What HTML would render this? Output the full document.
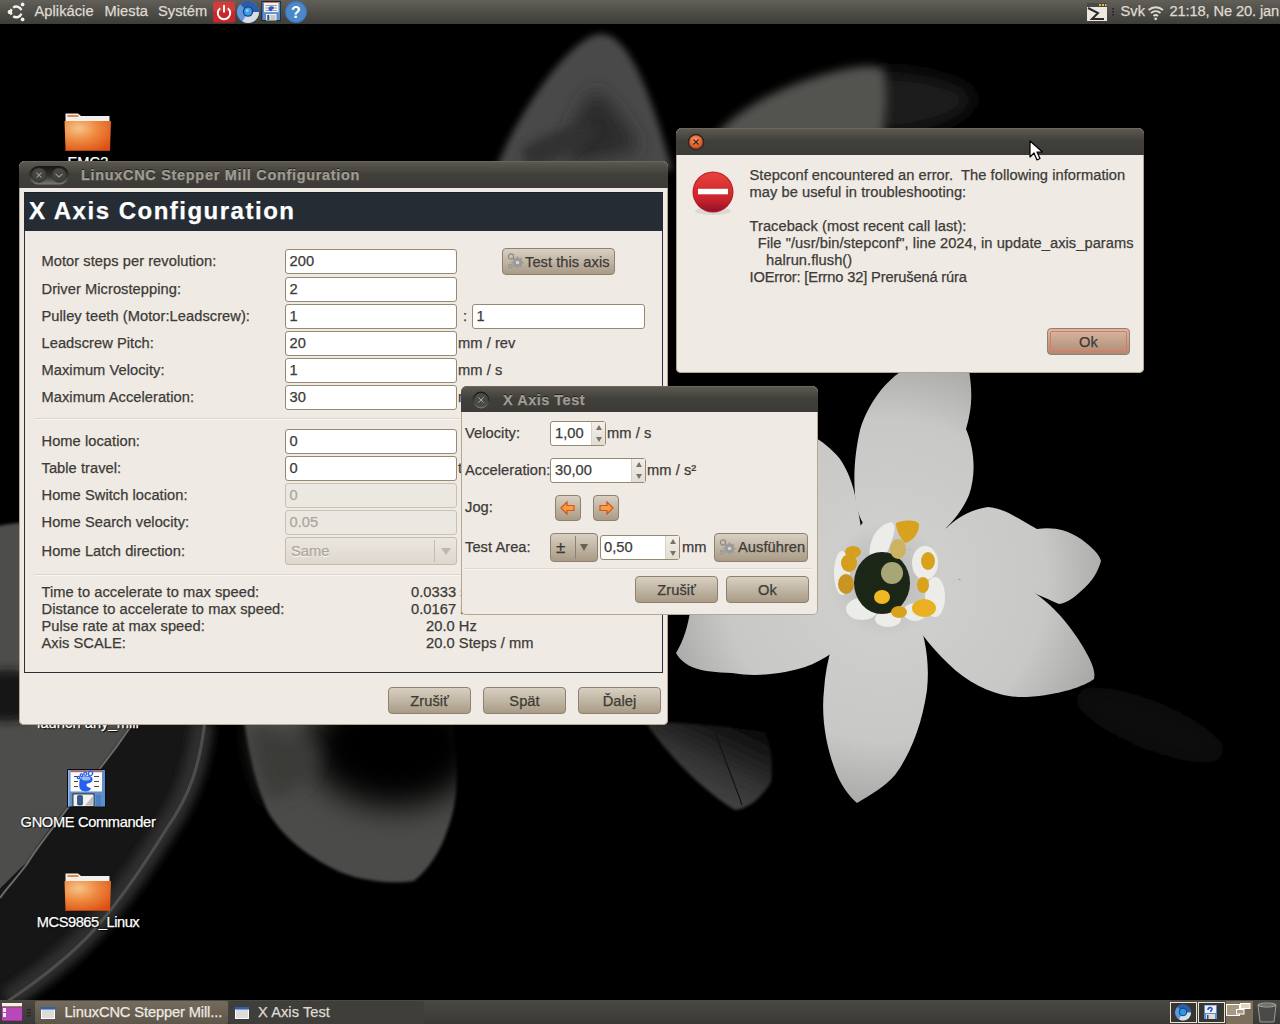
<!DOCTYPE html>
<html><head><meta charset="utf-8">
<style>
*{box-sizing:border-box;margin:0;padding:0}
html,body{width:1280px;height:1024px;overflow:hidden;background:#000}
body{position:relative;font-family:"Liberation Sans",sans-serif;font-size:14.67px;letter-spacing:0.05px;color:#3c3b37;line-height:17px;-webkit-text-stroke:0.25px currentColor}
.a{position:absolute;white-space:pre}
#wall{position:absolute;left:0;top:0;width:1280px;height:1024px}
#toppanel{position:absolute;left:0;top:0;width:1280px;height:24px;background:linear-gradient(#625f59,#3d3c38);}
#botpanel{position:absolute;left:0;top:1000px;width:1280px;height:24px;background:linear-gradient(#4a4843,#3a3935);}
.pt{position:absolute;color:#dfdbd2;}
.win{position:absolute;background:#efeae4;border-radius:6px 6px 5px 5px;box-shadow:inset 0 0 0 1px #b3a790}
.tbar{position:absolute;left:0;top:0;right:0;border-radius:6px 6px 0 0;background:linear-gradient(#5d5a53 0%,#403f3a 50%,#3c3b37 100%);box-shadow:inset 0 1px 0 #6e6658}
.ttl{position:absolute;font-weight:bold;color:#a09c91;letter-spacing:0.68px;font-size:14.5px;text-shadow:0 -1px 0 #222;white-space:pre}
.entry{position:absolute;background:#fff;border:1px solid #978a73;border-radius:3px;height:25px}
.dis{background:#ebe8e1;border-color:#c9c1b4}
.combo{position:absolute;border:1px solid #978a73;border-radius:3px;background:linear-gradient(#e6e1d8,#d3ccbf)}
.combo.dis{background:linear-gradient(#ebe7e0,#ddd7cd);border-color:#c4bcae}
.csep{position:absolute;top:2px;bottom:2px;width:1px;background:#c4bcae}
.carr{position:absolute;width:0;height:0;border-left:5px solid transparent;border-right:5px solid transparent;border-top:7px solid #bfb8ac}
.sep{position:absolute;height:2px;border-top:1px solid #ddd8ce;border-bottom:1px solid #f8f6f2}
.spin{position:absolute;border-left:1px solid #d8d2c6;background:linear-gradient(#f2efe9,#e2ddd3)}
.spin:before{content:'';position:absolute;left:3.5px;top:3px;border-left:3px solid transparent;border-right:3px solid transparent;border-bottom:5px solid #77736a}
.spin:after{content:'';position:absolute;left:3.5px;bottom:3px;border-left:3px solid transparent;border-right:3px solid transparent;border-top:5px solid #77736a}
.btn{position:absolute;border:1px solid #8e816d;border-radius:4px;background:linear-gradient(#d9d0c2,#a99b86);color:#3c3b37}
</style></head><body>
<svg id="wall" width="1280" height="1024" viewBox="0 0 1280 1024">
<defs>
<filter id="b8" x="-50%" y="-50%" width="200%" height="200%"><feGaussianBlur stdDeviation="9"/></filter>
<filter id="b4" x="-50%" y="-50%" width="200%" height="200%"><feGaussianBlur stdDeviation="3.5"/></filter>
<filter id="b14" x="-50%" y="-50%" width="200%" height="200%"><feGaussianBlur stdDeviation="16"/></filter>
<filter id="b5" x="-50%" y="-50%" width="200%" height="200%"><feGaussianBlur stdDeviation="5"/></filter>
<filter id="b2" x="-20%" y="-20%" width="140%" height="140%"><feGaussianBlur stdDeviation="1.5"/></filter>
<filter id="b1"><feGaussianBlur stdDeviation="0.7"/></filter>
<linearGradient id="gC" x1="0" y1="0" x2="0.25" y2="1"><stop offset="0" stop-color="#222221"/><stop offset="0.55" stop-color="#363634"/><stop offset="1" stop-color="#555553"/></linearGradient>
<linearGradient id="gB" x1="1" y1="0" x2="0" y2="0.3"><stop offset="0" stop-color="#333331"/><stop offset="0.35" stop-color="#1c1c1b"/><stop offset="1" stop-color="#121211"/></linearGradient>
<radialGradient id="gPet" cx="885" cy="580" r="230" gradientUnits="userSpaceOnUse"><stop offset="0" stop-color="#b4b4b2"/><stop offset="0.25" stop-color="#cececc"/><stop offset="0.7" stop-color="#c8c8c6"/><stop offset="1" stop-color="#a8a8a6"/></radialGradient>
</defs>
<rect width="1280" height="1024" fill="#000"/>
<!-- top pointed leaf -->
<path d="M601,34 C628,34 650,90 672,170 L496,170 C515,115 572,34 601,34 Z" fill="#4a4a48" filter="url(#b4)"/>
<path d="M596,90 C610,100 628,125 640,150 L570,165 C560,140 582,100 596,90 Z" fill="#2a2a29" filter="url(#b8)"/>
<path d="M520,150 C550,130 580,120 600,130 C585,145 560,160 530,170 Z" fill="#303030" filter="url(#b5)"/>
<!-- top elongated leaf -->
<path d="M870,72 C910,70 950,78 975,95 C970,115 940,130 880,135 Z" fill="#1c1c1b" filter="url(#b8)"/>
<path d="M712,140 C735,108 790,80 850,68 C868,65 878,66 884,70 C888,95 886,120 882,140 Z" fill="#525250" filter="url(#b5)"/>
<!-- left leaf light region -->
<path d="M-20,530 C40,515 100,520 140,530 L140,724 L129,729 C115,750 95,775 81,791 C60,818 35,850 27,864 C15,880 5,890 0,898 L-20,910 Z" fill="#4d4d4b" filter="url(#b2)"/>
<path d="M-20,676 C0,668 20,668 30,676 L30,718 C20,722 0,722 -20,718 Z" fill="#151515" filter="url(#b5)"/>
<!-- dark band -->
<path d="M120,720 L206,720 C200,760 190,790 167,826 C150,855 125,895 94,929 C75,950 45,975 8,1000 L-10,1000 L-10,898 C10,880 25,862 27,864 C40,840 60,815 81,791 C95,775 115,750 129,729 Z" fill="#161616"/>
<path d="M203,722 C198,765 188,795 165,830 C146,860 122,897 92,930 C72,952 44,975 8,1000" fill="none" stroke="#2e2e2d" stroke-width="22" filter="url(#b5)"/>
<path d="M205,720 C200,765 190,795 167,828 C148,858 124,896 94,930 C74,952 45,976 8,1001" fill="none" stroke="#4e4e4c" stroke-width="3" filter="url(#b1)"/>

<path d="M132,722 L129,729 C115,750 95,775 81,791 C60,818 35,850 27,864 C15,880 5,890 0,898" fill="none" stroke="#6a6a68" stroke-width="2" filter="url(#b1)"/>
<!-- center bottom leaf -->
<path d="M244,720 C250,760 258,790 268,812 C283,838 310,858 340,872 C365,882 395,884 414,881 C428,870 440,852 447,831 C455,810 458,790 456,757 L452,720 Z" fill="#4c4c4a" filter="url(#b2)"/>
<ellipse cx="395" cy="745" rx="85" ry="62" fill="#050505" filter="url(#b14)"/>
<path d="M250,722 C270,730 300,740 320,750 C315,775 300,790 270,800 C258,780 252,760 250,722 Z" fill="#3a3a39" filter="url(#b8)"/>
<!-- dark leaf under flower -->
<linearGradient id="gL" gradientUnits="userSpaceOnUse" x1="740" y1="725" x2="705" y2="800"><stop offset="0" stop-color="#0c0c0c"/><stop offset="0.6" stop-color="#333333"/><stop offset="1" stop-color="#444443"/></linearGradient>
<path d="M645,722 C680,722 725,726 765,732 C772,750 773,765 771,782 C760,800 748,808 735,810 C705,792 672,760 645,722 Z" fill="url(#gL)" filter="url(#b2)"/>
<path d="M715,732 C725,760 735,785 742,805" fill="none" stroke="#141414" stroke-width="1.2"/>
<!-- faint blur right -->
<ellipse cx="1150" cy="725" rx="80" ry="24" transform="rotate(22 1150 725)" fill="#0a0a0a" filter="url(#b8)"/>
<!-- flower petals -->
<g filter="url(#b1)" fill="url(#gPet)">
<circle cx="880" cy="590" r="50"/><ellipse cx="922" cy="565" rx="18" ry="22"/><ellipse cx="948" cy="548" rx="22" ry="20"/><ellipse cx="945" cy="582" rx="14" ry="10"/><ellipse cx="868" cy="535" rx="10" ry="14"/>
<path d="M887,551 C872,540 856,520 855,495 C853,470 856,448 860,430 C866,410 880,385 903,370 L969,370 C972,390 973,405 966,429 C975,450 976,475 969,495 C962,512 950,526 925,548 Z"/>
<path d="M812,436 C822,441 832,449 840,459 C848,471 853,484 856,500 C859,515 862,530 862,540 L868,600 L812,600 Z"/>
<path d="M860,600 L812,600 L690,612 C688,625 684,640 676,653 C685,668 700,672 732,673 C760,678 790,672 805,667 C825,660 840,648 860,630 Z"/>
<path d="M850,605 C835,630 826,660 824,690 C821,717 826,745 834,767 C840,785 850,797 857,803 C870,795 885,787 895,775 C910,755 922,725 927,690 C930,660 925,635 915,610 Z"/>
<path d="M915,590 C950,578 990,574 1015,582 C1045,595 1066,620 1080,642 C1090,658 1096,670 1094,679 C1085,686 1060,695 1027,697 C1000,698 977,688 955,670 C935,652 922,635 912,620 Z"/>
<path d="M930,548 C945,525 965,510 988,507 C1005,508 1020,520 1037,529 C1050,527 1065,528 1081,539 C1092,547 1100,555 1101,561 C1098,572 1092,582 1080,592 C1072,600 1063,604 1059,604 C1045,598 1030,590 1019,589 C1000,585 975,582 937,576 Z"/>
</g>
<!-- center -->
<g fill="#ecece9" filter="url(#b1)">
<path d="M870,556 C868,540 878,524 892,522 C898,528 892,540 886,556 Z"/>
<ellipse cx="925" cy="563" rx="13" ry="17"/><ellipse cx="862" cy="609" rx="16" ry="11"/><ellipse cx="888" cy="619" rx="13" ry="8"/>
<ellipse cx="935" cy="597" rx="10" ry="20"/><ellipse cx="842" cy="573" rx="8" ry="22"/><ellipse cx="915" cy="612" rx="12" ry="9"/>
</g>
<ellipse cx="882" cy="583" rx="28" ry="31" fill="#1f2519" filter="url(#b1)"/>
<ellipse cx="892" cy="573" rx="11" ry="11" fill="#a6a676" filter="url(#b1)"/>
<g filter="url(#b1)">
<path d="M896,523 C902,520 916,519 919,524 C920,532 912,542 905,543 C900,538 896,530 896,523 Z" fill="#d9a21c"/>
<ellipse cx="898" cy="549" rx="8" ry="10" fill="#cdb360"/>
<ellipse cx="853" cy="552" rx="8" ry="6" fill="#d59e1e"/><ellipse cx="849" cy="563" rx="8" ry="9" fill="#d59e1e"/>
<ellipse cx="846" cy="584" rx="8" ry="10" fill="#c99420"/>
<ellipse cx="928" cy="561" rx="7" ry="9" fill="#d9a21c"/><ellipse cx="923" cy="585" rx="6" ry="8" fill="#d9a21c"/>
<ellipse cx="882" cy="597" rx="8" ry="7" fill="#f0b820"/><ellipse cx="899" cy="612" rx="8" ry="6" fill="#d9a21c"/>
<ellipse cx="924" cy="608" rx="12" ry="9" fill="#eab020"/>
</g>
</svg>
<svg class="a" style="left:64px;top:113px" width="48" height="40" viewBox="0 0 48 40">
<defs><radialGradient id="fg1" cx="0.3" cy="0.25" r="0.9"><stop offset="0" stop-color="#f6c48a"/><stop offset="0.45" stop-color="#ee8a40"/><stop offset="1" stop-color="#dc4e12"/></radialGradient></defs>
<path d="M1.5,0.5 L14,0.5 L17,3 L45.5,3 L45.5,10 L1.5,10 Z" fill="#f2f0ec"/><rect x="3.5" y="2" width="11" height="2" fill="#e8884a"/>
<path d="M0.5,8 L47,8 L46,37.5 L1.5,37.5 Z" fill="url(#fg1)"/><rect x="1" y="37" width="45" height="1" fill="#b8400e"/>
</svg>
<svg class="a" style="left:64px;top:873px" width="48" height="40" viewBox="0 0 48 40">
<defs><radialGradient id="fg2" cx="0.3" cy="0.25" r="0.9"><stop offset="0" stop-color="#f6c48a"/><stop offset="0.45" stop-color="#ee8a40"/><stop offset="1" stop-color="#dc4e12"/></radialGradient></defs>
<path d="M1.5,0.5 L14,0.5 L17,3 L45.5,3 L45.5,10 L1.5,10 Z" fill="#f2f0ec"/><rect x="3.5" y="2" width="11" height="2" fill="#e8884a"/>
<path d="M0.5,8 L47,8 L46,37.5 L1.5,37.5 Z" fill="url(#fg2)"/><rect x="1" y="37" width="45" height="1" fill="#b8400e"/>
</svg>
<svg class="a" style="left:67px;top:769px" width="39" height="39" viewBox="0 0 39 39">
<rect x="0" y="0" width="39" height="38.5" rx="1" fill="#0a0e14"/><rect x="1" y="1" width="37" height="36.5" fill="#5d8fcc"/><rect x="1" y="1" width="1.5" height="36.5" fill="#8fb4e0"/>
<rect x="3.5" y="2" width="31.5" height="20.5" fill="#fbfaf8"/><rect x="3.5" y="2" width="31.5" height="1.2" fill="#e05a38"/>
<g stroke="#333" stroke-width="0.9"><line x1="7" y1="7.5" x2="11" y2="7.5"/><line x1="27" y1="7.5" x2="32" y2="7.5"/><line x1="7" y1="12.5" x2="11" y2="12.5"/><line x1="27" y1="12.5" x2="32" y2="12.5"/><line x1="7" y1="17.5" x2="11" y2="17.5"/><line x1="27" y1="17.5" x2="32" y2="17.5"/></g>
<path d="M12.5,12 C12.5,8 17,6.5 21.5,7 C26,7.5 26.5,11 24.5,13 C22,15 20,13.5 19.5,16 C19.5,18.5 23,18 24,19.5 C23,22.5 17,23.5 14,21 C11.5,18.5 12.5,15 12.5,12 Z" fill="#2660ec"/>
<ellipse cx="19" cy="9.5" rx="4.5" ry="2" fill="#9cbcf4"/>
<g fill="none" stroke="#2660ec" stroke-width="1.3"><circle cx="11.5" cy="8.5" r="1.2"/><circle cx="14.5" cy="6.2" r="1.3"/><circle cx="18.3" cy="4.8" r="1.5"/><ellipse cx="23.5" cy="4.5" rx="2" ry="2.3" transform="rotate(30 23.5 4.5)"/></g>
<rect x="6" y="25" width="21" height="12.5" fill="#f2f2f0" stroke="#111" stroke-width="0.8"/><rect x="10.5" y="26.5" width="5" height="9.5" rx="1" fill="#2f5d96" stroke="#111" stroke-width="0.5"/><path d="M18,36.5 L26,27 L26,36.5 Z" fill="#bdbdbb"/>
<rect x="29" y="26" width="5" height="11" fill="#4f7fc0"/>
</svg>
<div class="a" style="left:0px;top:814.2px;width:176px;text-align:center;letter-spacing:-0.35px;color:#fff;text-shadow:0 0 2px #000,1px 1px 1px #000">GNOME Commander</div>
<div class="a" style="left:0px;top:914.2px;width:176px;text-align:center;letter-spacing:-0.45px;color:#fff;text-shadow:0 0 2px #000,1px 1px 1px #000">MCS9865_Linux</div>
<div class="a" style="left:0px;top:154.2px;width:176px;text-align:center;color:#fff;text-shadow:0 0 2px #000,1px 1px 1px #000">EMC2</div>
<div class="a" style="left:0px;top:715.2px;width:176px;text-align:center;color:#fff;text-shadow:0 0 2px #000,1px 1px 1px #000">launch any_mill</div>
<div id="toppanel"></div>
<svg class="a" style="left:0;top:0" width="320" height="24" viewBox="0 0 320 24">
<g fill="none" stroke="#f4f2ee" stroke-width="2.4"><path d="M13.2,7.6 A5.3,5.3 0 0 1 21.4,10.2"/><path d="M21.4,13.6 A5.3,5.3 0 0 1 13.2,16.2"/><path d="M11.6,14.7 A5.3,5.3 0 0 1 11.6,9.1"/></g>
<g fill="#f4f2ee"><circle cx="9.5" cy="12" r="1.9"/><circle cx="22.6" cy="4.4" r="1.9"/><circle cx="22.6" cy="19.4" r="1.9"/></g>
<rect x="213" y="1.5" width="22" height="21" rx="2" fill="#c9262a"/><rect x="213" y="1.5" width="22" height="10" rx="2" fill="#d94a45" opacity="0.6"/>
<path d="M220.2,8.2 A6.2,6.2 0 1 0 227.8,8.2" fill="none" stroke="#fff" stroke-width="2"/><line x1="224" y1="5" x2="224" y2="12.5" stroke="#fff" stroke-width="2"/>
<circle cx="248" cy="12" r="11" fill="#5f9ae0"/><path d="M248,12 L240.2,4.2 A11,11 0 0 1 259,12 Z" fill="#2d5da6"/><path d="M248,12 L259,12 A11,11 0 0 1 242.5,21.5 Z" fill="#d9dee6"/>
<circle cx="248" cy="11.5" r="5.2" fill="#1f3f78"/><circle cx="248" cy="11.5" r="3.9" fill="#3aa0e8"/><circle cx="247.2" cy="10.6" r="1.5" fill="#8fd0ff"/>
<rect x="261.5" y="1.2" width="19.5" height="19.5" fill="#111820"/><rect x="262.3" y="2" width="17.9" height="18" fill="#5b8fd0"/><rect x="264" y="2.3" width="14.5" height="9.8" fill="#f6f2ec"/><rect x="264" y="2.2" width="14.5" height="0.8" fill="#e06040"/>
<g stroke="#666" stroke-width="0.6"><line x1="265.5" y1="5.5" x2="277" y2="5.5"/><line x1="265.5" y1="8" x2="277" y2="8"/><line x1="265.5" y1="10.5" x2="277" y2="10.5"/></g>
<path d="M268.5,8.5 C268.5,5.5 274,5.5 274,7.8 C274,9.5 271.5,9 272,11 C270,11.5 268.5,10.5 268.5,8.5 Z" fill="#2458e0"/>
<rect x="266" y="14" width="10.5" height="6.5" fill="#f0f0ee"/><rect x="267.3" y="15" width="2" height="5" fill="#2a4e80"/><rect x="270.5" y="15" width="5" height="5" fill="#c8c8c6"/>
<circle cx="296" cy="12" r="11" fill="#3a78bc"/><circle cx="296" cy="12" r="10" fill="#4a88c8"/>
<text x="296" y="18" font-family="Liberation Sans" font-weight="bold" font-size="16" fill="#fff" text-anchor="middle">?</text>
</svg>
<div class="pt a" style="left:34.5px;top:2.5px">Aplikácie</div>
<div class="pt a" style="left:104.5px;top:2.5px">Miesta</div>
<div class="pt a" style="left:158px;top:2.5px">Systém</div>
<svg class="a" style="left:1080px;top:0" width="200" height="24" viewBox="1080 0 200 24">
<rect x="1087" y="3" width="20" height="18" fill="#ece8e0"/><rect x="1087" y="3" width="20" height="4" fill="#4a4844"/><rect x="1099" y="4" width="2" height="2" fill="#e8b040"/><rect x="1102" y="4" width="2" height="2" fill="#e8b040"/><rect x="1105" y="4" width="1.5" height="2" fill="#e8b040"/>
<path d="M1088,8 L1098,13 L1092,19 L1104,19" fill="none" stroke="#2a2a28" stroke-width="2"/>
<g fill="#2a2926"><rect x="1112" y="8" width="2" height="1.5"/><rect x="1112" y="11" width="2" height="1.5"/><rect x="1112" y="14" width="2" height="1.5"/></g>
<g fill="none" stroke="#dfdbd2" stroke-width="1.8"><path d="M1148.5,10 A11,11 0 0 1 1163,10"/><path d="M1151,13 A7,7 0 0 1 1160.5,13"/><path d="M1153.5,16 A3.5,3.5 0 0 1 1158,16"/></g><circle cx="1155.7" cy="18.8" r="1.4" fill="#dfdbd2"/>
</svg>
<div class="pt a" style="left:1120.5px;top:2.5px">Svk</div>
<div class="pt a" style="left:1169.5px;top:2.5px;letter-spacing:-0.12px">21:18, Ne 20. jan</div>
<div id="botpanel"></div>
<div class="a" style="left:35px;top:1001px;width:193px;height:23px;background:linear-gradient(#756b5d,#5e564a);border-radius:2px"></div>
<div class="a" style="left:229px;top:1001px;width:195px;height:23px;background:#403e3a;border-radius:2px"></div>
<svg class="a" style="left:0;top:999px" width="1280" height="25" viewBox="0 999 1280 25">
<rect x="1.5" y="1003" width="21" height="18" rx="1" fill="#8a1a8e"/><rect x="2" y="1003" width="20" height="3.5" fill="#f2f0e0"/><rect x="2" y="1006.5" width="20" height="1" fill="#6a7a30"/><rect x="2" y="1007.5" width="20" height="13" fill="#b848b8"/><rect x="3" y="1008" width="3" height="4" fill="#f0f0f0"/><rect x="3" y="1013" width="3" height="4" fill="#f0f0f0"/>
<g fill="#2a2926"><rect x="27" y="1009" width="4" height="1.5"/><rect x="27" y="1012" width="4" height="1.5"/><rect x="27" y="1015" width="4" height="1.5"/></g>
<rect x="41.5" y="1007.5" width="13" height="11" fill="#dcdcd8" stroke="#fff" stroke-width="1"/><rect x="41" y="1007" width="14" height="2.5" fill="#2f5fb0"/>
<rect x="235.5" y="1007.5" width="13" height="11" fill="#dcdcd8" stroke="#fff" stroke-width="1"/><rect x="235" y="1007" width="14" height="2.5" fill="#2f5fb0"/>
<rect x="1170.5" y="1002.5" width="26" height="20" fill="#363531" stroke="#ebe3cf" stroke-width="1"/>
<circle cx="1183" cy="1012.5" r="8" fill="#5f9ae0"/><path d="M1183,1012.5 L1177.3,1006.8 A8,8 0 0 1 1191,1012.5 Z" fill="#2d5da6"/><path d="M1183,1012.5 L1191,1012.5 A8,8 0 0 1 1179,1019.4 Z" fill="#d9dee6"/><circle cx="1183" cy="1012" r="3.8" fill="#2a9ae6" stroke="#1d3f78" stroke-width="1"/>
<rect x="1198.5" y="1002.5" width="26" height="20" fill="#363531" stroke="#ebe3cf" stroke-width="1"/>
<rect x="1204" y="1005" width="13" height="14" fill="#5a8fd0"/><rect x="1205" y="1005.5" width="11" height="7.5" fill="#f2eee8"/><path d="M1208,1010 C1208,1007 1212,1007 1212,1009 C1212,1011 1210,1010 1211,1012" fill="none" stroke="#2050e0" stroke-width="1.6"/><rect x="1206" y="1014" width="9" height="5" fill="#ddd"/><rect x="1207" y="1015" width="1.5" height="4" fill="#2a4e80"/>
<rect x="1226" y="1001" width="27" height="23" fill="#7b6e5a"/>
<rect x="1226.5" y="1004.5" width="13" height="11" fill="#a89a82" stroke="#fff" stroke-width="1"/><rect x="1240.5" y="1003.5" width="9.5" height="5" fill="#ddd3c0" stroke="#fff" stroke-width="1"/><rect x="1236.5" y="1009.5" width="7.5" height="4.5" fill="#a89a82" stroke="#fff" stroke-width="1"/>
<path d="M1258,1005 L1260,1022 L1274,1022 L1276,1005 Z" fill="#4a4a48" stroke="#9a9a98" stroke-width="1"/><ellipse cx="1267" cy="1005" rx="9" ry="2" fill="none" stroke="#aaa" stroke-width="1"/>
</svg>
<div class="a" style="left:64.5px;top:1004px;color:#eeeae2;letter-spacing:-0.12px">LinuxCNC Stepper Mill...</div>
<div class="a" style="left:258px;top:1004px;color:#dfdbd2">X Axis Test</div>
<div class="win" style="left:19px;top:161px;width:649px;height:564px">
  <div class="tbar" style="height:27px"></div>
  <div class="ttl" style="left:62px;top:5.8px">LinuxCNC Stepper Mill Configuration</div>
  <div class="a" style="left:5px;top:31px;width:639px;height:39px;background:#252c34;box-shadow:inset 0 1px 0 #1b2027"></div>
  <div class="a" style="left:10px;top:35.2px;font-size:24px;line-height:30px;font-weight:bold;color:#fff;letter-spacing:1.5px">X Axis Configuration</div>
  <div class="a" style="left:5px;top:70px;width:639px;height:442px;border:1px solid #2b3038;border-top:none"></div>
</div>
<div class="a" style="left:41.5px;top:253.2px;">Motor steps per revolution:</div>
<div class="entry" style="left:285px;top:249px;width:172px"></div>
<div class="a" style="left:289.5px;top:253.2px;">200</div>
<div class="a" style="left:41.5px;top:281.2px;">Driver Microstepping:</div>
<div class="entry" style="left:285px;top:277px;width:172px"></div>
<div class="a" style="left:289.5px;top:281.2px;">2</div>
<div class="a" style="left:41.5px;top:308.2px;">Pulley teeth (Motor:Leadscrew):</div>
<div class="entry" style="left:285px;top:304px;width:172px"></div>
<div class="a" style="left:289.5px;top:308.2px;">1</div>
<div class="a" style="left:41.5px;top:335.2px;">Leadscrew Pitch:</div>
<div class="entry" style="left:285px;top:331px;width:172px"></div>
<div class="a" style="left:289.5px;top:335.2px;">20</div>
<div class="a" style="left:41.5px;top:362.2px;">Maximum Velocity:</div>
<div class="entry" style="left:285px;top:358px;width:172px"></div>
<div class="a" style="left:289.5px;top:362.2px;">1</div>
<div class="a" style="left:41.5px;top:389.2px;">Maximum Acceleration:</div>
<div class="entry" style="left:285px;top:385px;width:172px"></div>
<div class="a" style="left:289.5px;top:389.2px;">30</div>
<div class="a" style="left:463px;top:308.2px;">:</div>
<div class="entry" style="left:472px;top:304px;width:173px"></div>
<div class="a" style="left:476.5px;top:308.2px;">1</div>
<div class="a" style="left:458px;top:335.2px;">mm / rev</div>
<div class="a" style="left:458px;top:362.2px;">mm / s</div>
<div class="a" style="left:458px;top:389.2px;">mm / s²</div>
<div class="sep" style="left:34px;top:418px;width:619px"></div>
<div class="a" style="left:41.5px;top:433.2px;">Home location:</div>
<div class="entry" style="left:285px;top:429px;width:172px"></div>
<div class="a" style="left:289.5px;top:433.2px;">0</div>
<div class="a" style="left:41.5px;top:460.2px;">Table travel:</div>
<div class="entry" style="left:285px;top:456px;width:172px"></div>
<div class="a" style="left:289.5px;top:460.2px;">0</div>
<div class="a" style="left:41.5px;top:487.2px;">Home Switch location:</div>
<div class="entry dis" style="left:285px;top:483px;width:172px"></div>
<div class="a" style="left:289.5px;top:487.2px;color:#aca69b">0</div>
<div class="a" style="left:41.5px;top:514.2px;">Home Search velocity:</div>
<div class="entry dis" style="left:285px;top:510px;width:172px"></div>
<div class="a" style="left:289.5px;top:514.2px;color:#aca69b">0.05</div>
<div class="a" style="left:458px;top:460.2px;">t</div>
<div class="a" style="left:41.5px;top:542.7px;">Home Latch direction:</div>
<div class="combo dis" style="left:285px;top:537px;width:172px;height:28px"><div class="csep" style="left:148px"></div><div class="carr" style="left:155px;top:10px"></div></div>
<div class="a" style="left:291px;top:542.7px;color:#aca69b;text-shadow:0 1px 0 #fff">Same</div>
<div class="sep" style="left:34px;top:574px;width:619px"></div>
<div class="a" style="left:41.5px;top:583.7px;">Time to accelerate to max speed:</div>
<div class="a" style="left:411px;top:583.7px;">0.0333 s</div>
<div class="a" style="left:41.5px;top:600.7px;">Distance to accelerate to max speed:</div>
<div class="a" style="left:411px;top:600.7px;">0.0167 mm</div>
<div class="a" style="left:41.5px;top:617.7px;">Pulse rate at max speed:</div>
<div class="a" style="left:426px;top:617.7px;">20.0 Hz</div>
<div class="a" style="left:41.5px;top:634.7px;">Axis SCALE:</div>
<div class="a" style="left:426px;top:634.7px;">20.0 Steps / mm</div>
<div class="btn" style="left:502px;top:248px;width:113px;height:27px;"></div>
<div class="a" style="left:525px;top:253.5px;">Test this axis</div>
<div class="btn" style="left:388px;top:687px;width:83px;height:27px;"></div>
<div class="a" style="left:388px;top:692.5px;width:83px;text-align:center">Zrušiť</div>
<div class="btn" style="left:483px;top:687px;width:83px;height:27px;"></div>
<div class="a" style="left:483px;top:692.5px;width:83px;text-align:center">Spät</div>
<div class="btn" style="left:578px;top:687px;width:83px;height:27px;"></div>
<div class="a" style="left:578px;top:692.5px;width:83px;text-align:center">Ďalej</div>
<svg class="a" style="left:26px;top:163px" width="46" height="24" viewBox="0 0 46 24">
<defs><linearGradient id="pill" x1="0" y1="0" x2="0" y2="1"><stop offset="0" stop-color="#151513"/><stop offset="0.6" stop-color="#3a3935"/><stop offset="1" stop-color="#7e7c76"/></linearGradient>
<linearGradient id="btnc" x1="0" y1="0" x2="0" y2="1"><stop offset="0" stop-color="#4b4a45"/><stop offset="1" stop-color="#3e3d39"/></linearGradient></defs>
<rect x="3" y="3" width="40" height="18.5" rx="9.25" fill="url(#pill)"/>
<circle cx="13" cy="12.2" r="7.2" fill="url(#btnc)" stroke="#302f2b" stroke-width="0.6"/><circle cx="33" cy="12.2" r="7.2" fill="url(#btnc)" stroke="#302f2b" stroke-width="0.6"/>
<g stroke="#9a9890" stroke-width="1.1"><line x1="10.5" y1="9.7" x2="15.5" y2="14.7"/><line x1="15.5" y1="9.7" x2="10.5" y2="14.7"/></g>
<path d="M29.5,10.8 L33,14 L36.5,10.8" fill="none" stroke="#9a9890" stroke-width="1.1"/>
</svg>
<svg class="a" style="left:506px;top:252px" width="18" height="18" viewBox="0 0 18 18">
<g fill="none" stroke="#8a8a88" stroke-width="1.2"><circle cx="5" cy="4.5" r="2.6"/></g>
<circle cx="11.5" cy="10.5" r="4.5" fill="#9a9a98"/><circle cx="11.5" cy="10.5" r="2" fill="#d6d3cc"/>
<g stroke="#9a9a98" stroke-width="2"><line x1="11.5" y1="4.5" x2="11.5" y2="16.5"/><line x1="5.5" y1="10.5" x2="17.5" y2="10.5"/><line x1="7.3" y1="6.3" x2="15.7" y2="14.7"/><line x1="15.7" y1="6.3" x2="7.3" y2="14.7"/></g>
<circle cx="11.5" cy="10.5" r="1.8" fill="#d6d3cc"/>
<g fill="#9a9a98"><rect x="2" y="12" width="2" height="2"/><rect x="4.5" y="12" width="2" height="2"/><rect x="2" y="14.5" width="2" height="2"/><rect x="4.5" y="14.5" width="2" height="2"/></g>
</svg>
<div class="win" style="left:461px;top:386px;width:357px;height:229px">
  <div class="tbar" style="height:26px"></div>
  <div class="ttl" style="left:42px;top:5.5px;letter-spacing:0.5px">X Axis Test</div>
</div>
<svg class="a" style="left:470px;top:390px" width="22" height="22" viewBox="0 0 22 22">
<defs><linearGradient id="ring" x1="0" y1="0" x2="0" y2="1"><stop offset="0" stop-color="#1c1b19"/><stop offset="0.5" stop-color="#2e2d2a"/><stop offset="1" stop-color="#7a7873"/></linearGradient></defs>
<circle cx="11" cy="10" r="8.4" fill="url(#ring)"/><circle cx="11" cy="10" r="7" fill="#4b4a46"/>
<g stroke="#b4b2ab" stroke-width="0.9"><line x1="8.3" y1="7.3" x2="13.7" y2="12.7"/><line x1="13.7" y1="7.3" x2="8.3" y2="12.7"/></g>
</svg>
<div class="a" style="left:465px;top:424.7px;">Velocity:</div>
<div class="entry" style="left:550px;top:421px;width:56px;height:25px"></div><div class="spin" style="left:591px;top:422px;width:14px;height:23px"></div>
<div class="a" style="left:555px;top:424.7px;">1,00</div>
<div class="a" style="left:607px;top:424.7px;">mm / s</div>
<div class="a" style="left:465px;top:461.7px;">Acceleration:</div>
<div class="entry" style="left:550px;top:458px;width:96px;height:25px"></div><div class="spin" style="left:631px;top:459px;width:14px;height:23px"></div>
<div class="a" style="left:555px;top:461.7px;">30,00</div>
<div class="a" style="left:647px;top:461.7px;">mm / s²</div>
<div class="a" style="left:465px;top:498.7px;">Jog:</div>
<div class="btn" style="left:555px;top:495px;width:26px;height:26px"></div><div class="btn" style="left:593px;top:495px;width:26px;height:26px"></div>
<svg class="a" style="left:555px;top:495px" width="64" height="26" viewBox="0 0 64 26">
<path d="M6,13 L12,7 L12,10.5 L19,10.5 L19,15.5 L12,15.5 L12,19 Z" fill="#f5a040" stroke="#d8541a" stroke-width="1.2"/>
<path d="M58,13 L52,7 L52,10.5 L45,10.5 L45,15.5 L52,15.5 L52,19 Z" fill="#f5a040" stroke="#d8541a" stroke-width="1.2"/>
</svg>
<div class="a" style="left:465px;top:538.7px;">Test Area:</div>
<div class="btn" style="left:550px;top:533px;width:48px;height:29px"><div class="csep" style="left:24px;background:#8e816d"></div></div>
<div class="a" style="left:556px;top:539.2px;font-size:17px">±</div>
<div class="carr" style="left:580px;top:544px;border-top-color:#6a6258;border-left-width:4.5px;border-right-width:4.5px;border-top-width:7px"></div>
<div class="entry" style="left:600px;top:535px;width:80px;height:25px"></div><div class="spin" style="left:665px;top:536px;width:14px;height:23px"></div>
<div class="a" style="left:604px;top:538.7px;">0,50</div>
<div class="a" style="left:682px;top:538.7px;">mm</div>
<div class="btn" style="left:714px;top:533px;width:94px;height:29px"></div>
<svg class="a" style="left:718px;top:538px" width="18" height="18" viewBox="0 0 18 18">
<g fill="none" stroke="#8a8a88" stroke-width="1.2"><circle cx="5" cy="4.5" r="2.6"/></g>
<circle cx="11.5" cy="10.5" r="4.5" fill="#9a9a98"/><circle cx="11.5" cy="10.5" r="2" fill="#d6d3cc"/>
<g stroke="#9a9a98" stroke-width="2"><line x1="11.5" y1="4.5" x2="11.5" y2="16.5"/><line x1="5.5" y1="10.5" x2="17.5" y2="10.5"/><line x1="7.3" y1="6.3" x2="15.7" y2="14.7"/><line x1="15.7" y1="6.3" x2="7.3" y2="14.7"/></g>
<circle cx="11.5" cy="10.5" r="1.8" fill="#d6d3cc"/>
<g fill="#9a9a98"><rect x="2" y="12" width="2" height="2"/><rect x="4.5" y="12" width="2" height="2"/><rect x="2" y="14.5" width="2" height="2"/><rect x="4.5" y="14.5" width="2" height="2"/></g>
</svg>
<div class="a" style="left:738px;top:539.2px;">Ausführen</div>
<div class="sep" style="left:464px;top:568px;width:348px"></div>
<div class="btn" style="left:635px;top:576px;width:83px;height:27px"></div>
<div class="a" style="left:635px;top:581.5px;width:83px;text-align:center">Zrušiť</div>
<div class="btn" style="left:726px;top:576px;width:83px;height:27px"></div>
<div class="a" style="left:726px;top:581.5px;width:83px;text-align:center">Ok</div>
<div class="win" style="left:676px;top:128px;width:468px;height:245px">
  <div class="tbar" style="height:27px"></div>
</div>
<svg class="a" style="left:685px;top:131px" width="22" height="22" viewBox="0 0 22 22">
<defs><radialGradient id="org" cx="0.45" cy="0.35" r="0.7"><stop offset="0" stop-color="#f8a070"/><stop offset="0.6" stop-color="#e8602a"/><stop offset="1" stop-color="#c04818"/></radialGradient></defs>
<circle cx="11" cy="11" r="8.3" fill="#2a2926"/><circle cx="11" cy="11" r="6.8" fill="url(#org)"/>
<g stroke="#3a2a20" stroke-width="1.3"><line x1="8.5" y1="8.5" x2="13.5" y2="13.5"/><line x1="13.5" y1="8.5" x2="8.5" y2="13.5"/></g>
</svg>
<svg class="a" style="left:688px;top:166px" width="52" height="52" viewBox="0 0 52 52">
<defs><linearGradient id="redg" x1="0" y1="0" x2="0" y2="1"><stop offset="0" stop-color="#e8413c"/><stop offset="0.7" stop-color="#c8232a"/><stop offset="1" stop-color="#8e1230"/></linearGradient></defs>
<ellipse cx="25" cy="45" rx="18" ry="4" fill="#000" opacity="0.08"/>
<circle cx="25" cy="26" r="20.5" fill="#b81c24"/><circle cx="25" cy="26" r="19.5" fill="url(#redg)"/>
<rect x="10" y="22.8" width="30" height="5.5" fill="#fff"/>
</svg>
<div class="a" style="left:749.5px;top:167.2px;">Stepconf encountered an error.  The following information</div>
<div class="a" style="left:749.5px;top:184.2px;">may be useful in troubleshooting:</div>
<div class="a" style="left:749.5px;top:218.2px;">Traceback (most recent call last):</div>
<div class="a" style="left:749.5px;top:235.2px;">  File "/usr/bin/stepconf", line 2024, in update_axis_params</div>
<div class="a" style="left:749.5px;top:252.2px;">    halrun.flush()</div>
<div class="a" style="left:749.5px;top:269.2px;letter-spacing:-0.15px">IOError: [Errno 32] Prerušená rúra</div>
<div class="btn" style="left:1047px;top:328px;width:83px;height:27px;background:linear-gradient(#d8b8a4,#b08a74)"><div class="a" style="left:2px;top:2px;right:2px;bottom:2px;border:1px solid #e07860;border-radius:2px"></div></div>
<div class="a" style="left:1047px;top:333.5px;width:83px;text-align:center">Ok</div>
<svg class="a" style="left:1029px;top:140px" width="16" height="22" viewBox="0 0 16 22">
<path d="M1,1 L1,17 L5,13 L8,20 L11,18.5 L8,12 L13.5,12 Z" fill="#fff" stroke="#000" stroke-width="1.2" stroke-linejoin="round"/>
</svg>
</body></html>
